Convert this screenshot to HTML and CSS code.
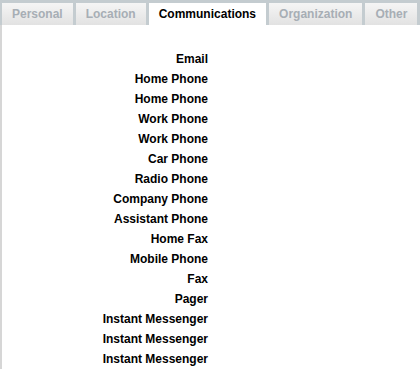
FILE: index.html
```html
<!DOCTYPE html>
<html lang="en">
<head>
  <meta charset="UTF-8" />
  <title>Contact Details</title>
  <link rel="stylesheet" href="styles.css">
</head>
<body>
  <div class="panel">
    <ul class="tabs">
      <li class="tab">Personal</li>
      <li class="tab">Location</li>
      <li class="tab active">Communications</li>
      <li class="tab">Organization</li>
      <li class="tab">Other</li>
    </ul>
    <div class="content">
      <table class="fields">
        <tr><th>Email</th><td></td></tr>
        <tr><th>Home Phone</th><td></td></tr>
        <tr><th>Home Phone</th><td></td></tr>
        <tr><th>Work Phone</th><td></td></tr>
        <tr><th>Work Phone</th><td></td></tr>
        <tr><th>Car Phone</th><td></td></tr>
        <tr><th>Radio Phone</th><td></td></tr>
        <tr><th>Company Phone</th><td></td></tr>
        <tr><th>Assistant Phone</th><td></td></tr>
        <tr><th>Home Fax</th><td></td></tr>
        <tr><th>Mobile Phone</th><td></td></tr>
        <tr><th>Fax</th><td></td></tr>
        <tr><th>Pager</th><td></td></tr>
        <tr><th>Instant Messenger</th><td></td></tr>
        <tr><th>Instant Messenger</th><td></td></tr>
        <tr><th>Instant Messenger</th><td></td></tr>
      </table>
    </div>
  </div>
</body>
</html>
```

FILE: styles.css
```css
* {
  box-sizing: border-box;
}

body {
  margin: 0;
  font-family: "Liberation Sans", Arial, sans-serif;
  background: #ffffff;
}

.panel {
  height: 369px;
  overflow: hidden;
}

.tabs {
  display: flex;
  gap: 3px;
  margin: 0;
  padding: 3px 0 0 2px;
  list-style: none;
  background: #c4ccd0;
}

.tab {
  flex-shrink: 0;
  height: 22px;
  line-height: 22px;
  padding: 0 10px;
  font-size: 12px;
  font-weight: bold;
  color: #a7aeb5;
  background: linear-gradient(#f5f5f5, #e2e2e2);
}

.tab.active {
  color: #000000;
  background: #ffffff;
}

.content {
  border-left: 2px solid #d6d6d6;
  height: 344px;
  padding-top: 24px;
}

.fields {
  border-collapse: collapse;
}

.fields th {
  width: 206px;
  height: 20px;
  padding: 0;
  text-align: right;
  font-size: 12px;
  font-weight: bold;
  color: #000000;
}

.fields td {
  padding: 0;
}
```
